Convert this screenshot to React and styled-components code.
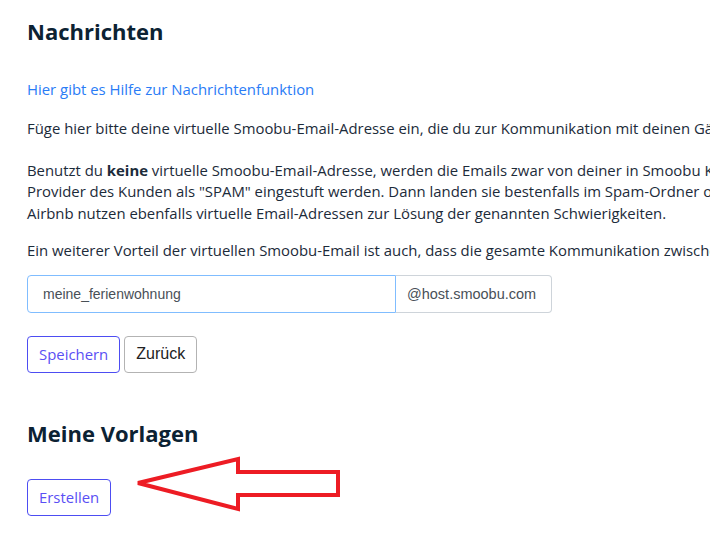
import React from 'react';
import styled, { createGlobalStyle } from 'styled-components';

const GlobalStyle = createGlobalStyle`
  html, body {
    margin: 0;
    padding: 0;
    background: #fff;
    overflow: hidden;
  }
  body {
    font-family: "Open Sans", Lato, sans-serif;
    color: #1c2b3a;
  }
`;

const Page = styled.div`
  position: relative;
  width: 1100px;
  padding: 16px 27px 20px;
`;

const Heading = styled.h2`
  margin: 0;
  font-size: 22px;
  line-height: 30px;
  font-weight: 700;
  color: #0c2233;
`;

const HelpLink = styled.a`
  display: inline-block;
  margin-top: 33px;
  font-size: 14.9px;
  line-height: 20px;
  color: #2a7cf6;
  text-decoration: none;
`;

const Paragraph = styled.p`
  margin: ${p => p.$top ?? 16}px 0 0;
  font-size: 14.9px;
  line-height: 21.5px;
  white-space: nowrap;
`;

const InputGroup = styled.div`
  display: flex;
  width: 525px;
  height: 38px;
  margin-top: 13px;
`;

const TextInput = styled.input`
  flex: 1;
  min-width: 0;
  box-sizing: border-box;
  height: 100%;
  padding: 0 15px;
  border: 1px solid #80bdff;
  border-radius: 4px 0 0 4px;
  font-family: "Liberation Sans", Arial, sans-serif;
  font-size: 14px;
  color: #495057;
  outline: none;
`;

const Addon = styled.span`
  display: flex;
  align-items: center;
  box-sizing: border-box;
  width: 156px;
  padding: 0 11px;
  border: 1px solid #ced4da;
  border-left: none;
  border-radius: 0 4px 4px 0;
  font-family: "Liberation Sans", Arial, sans-serif;
  font-size: 14.5px;
  color: #495057;
`;

const ButtonRow = styled.div`
  display: flex;
  gap: 4px;
  margin-top: 23px;
`;

const Button = styled.button`
  box-sizing: border-box;
  height: 37px;
  padding: 0 11px;
  background: #fff;
  border: 1px solid ${p => (p.$primary ? '#4d4df2' : '#b3b3b3')};
  border-radius: 4px;
  font-family: ${p => (p.$primary ? '"Open Sans", sans-serif' : '"Liberation Sans", Arial, sans-serif')};
  font-size: ${p => (p.$primary ? '14.9px' : '16px')};
  line-height: 20px;
  color: ${p => (p.$primary ? '#5a4ff4' : '#222')};
  cursor: pointer;
`;

const SubHeading = styled(Heading)`
  margin-top: 45px;
`;

const CreateRow = styled.div`
  margin-top: 31px;
`;

const Arrow = styled.svg`
  position: absolute;
  left: 134px;
  top: 455px;
`;

export default function App() {
  return (
    <>
      <GlobalStyle />
      <Page>
        <Heading>Nachrichten</Heading>
        <HelpLink href="#">Hier gibt es Hilfe zur Nachrichtenfunktion</HelpLink>
        <Paragraph $top={18}>
          Füge hier bitte deine virtuelle Smoobu-Email-Adresse ein, die du zur Kommunikation mit deinen Gästen nutzen möchtest.
        </Paragraph>
        <Paragraph $top={20}>
          Benutzt du <b>keine</b> virtuelle Smoobu-Email-Adresse, werden die Emails zwar von deiner in Smoobu Konto hinterlegten Adresse versendet, können aber vom
          <br />
          Provider des Kunden als "SPAM" eingestuft werden. Dann landen sie bestenfalls im Spam-Ordner oder werden gar nicht zugestellt. Portale wie Booking.com und
          <br />
          Airbnb nutzen ebenfalls virtuelle Email-Adressen zur Lösung der genannten Schwierigkeiten.
        </Paragraph>
        <Paragraph $top={16}>
          Ein weiterer Vorteil der virtuellen Smoobu-Email ist auch, dass die gesamte Kommunikation zwischen dir und deinen Gästen in Smoobu gespeichert wird.
        </Paragraph>
        <InputGroup>
          <TextInput defaultValue="meine_ferienwohnung" />
          <Addon>@host.smoobu.com</Addon>
        </InputGroup>
        <ButtonRow>
          <Button $primary>Speichern</Button>
          <Button>Zurück</Button>
        </ButtonRow>
        <SubHeading>Meine Vorlagen</SubHeading>
        <CreateRow>
          <Button $primary>Erstellen</Button>
        </CreateRow>
        <Arrow width="212" height="60" viewBox="0 0 212 60">
          <path
            d="M4 28 L104 4 L104 17 L204 17 L204 40 L104 40 L104 54 Z"
            fill="none"
            stroke="#ed1c24"
            strokeWidth="4"
            strokeLinejoin="miter"
          />
        </Arrow>
      </Page>
    </>
  );
}
